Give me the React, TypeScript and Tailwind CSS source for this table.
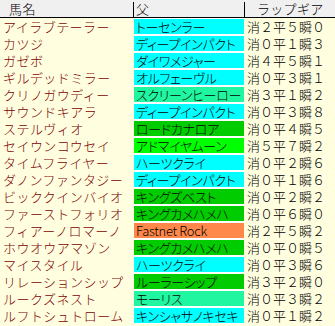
const CYAN = "bg-[#00ffff]";
const SPRING = "bg-[#20f6a0]";
const GREEN = "bg-[#00cc00]";
const LIME = "bg-[#00ff00]";
const ORANGE = "bg-[#ff884a]";

const rows = [
  { name: "アイラブテーラー", sire: "トーセンラー", bg: CYAN, gear: "消２平５瞬０" },
  { name: "カツジ", sire: "ディープインパクト", bg: CYAN, gear: "消０平１瞬３" },
  { name: "ガゼボ", sire: "ダイワメジャー", bg: CYAN, gear: "消４平５瞬１" },
  { name: "ギルデッドミラー", sire: "オルフェーヴル", bg: CYAN, gear: "消０平３瞬１" },
  { name: "クリノガウディー", sire: "スクリーンヒーロー", bg: SPRING, gear: "消３平１瞬２" },
  { name: "サウンドキアラ", sire: "ディープインパクト", bg: CYAN, gear: "消０平３瞬８" },
  { name: "ステルヴィオ", sire: "ロードカナロア", bg: GREEN, gear: "消０平４瞬５" },
  { name: "セイウンコウセイ", sire: "アドマイヤムーン", bg: LIME, gear: "消５平７瞬２" },
  { name: "タイムフライヤー", sire: "ハーツクライ", bg: CYAN, gear: "消０平２瞬６" },
  { name: "ダノンファンタジー", sire: "ディープインパクト", bg: CYAN, gear: "消０平１瞬６" },
  { name: "ビッククインバイオ", sire: "キングズベスト", bg: GREEN, gear: "消０平２瞬２" },
  { name: "ファーストフォリオ", sire: "キングカメハメハ", bg: GREEN, gear: "消０平６瞬０" },
  { name: "フィアーノロマーノ", sire: "Fastnet Rock", bg: ORANGE, gear: "消２平５瞬２" },
  { name: "ホウオウアマゾン", sire: "キングカメハメハ", bg: GREEN, gear: "消０平０瞬５" },
  { name: "マイスタイル", sire: "ハーツクライ", bg: CYAN, gear: "消０平３瞬６" },
  { name: "リレーションシップ", sire: "ルーラーシップ", bg: GREEN, gear: "消３平２瞬０" },
  { name: "ルークズネスト", sire: "モーリス", bg: SPRING, gear: "消０平３瞬２" },
  { name: "ルフトシュトローム", sire: "キンシャサノキセキ", bg: CYAN, gear: "消０平１瞬２" },
];

export default function App() {
  return (
    <div className="w-[335px] h-[326px] overflow-hidden bg-[#ffffe0] font-['Noto_Sans_CJK_JP',sans-serif] font-light text-[13px] leading-[15px]">
      <div className="flex h-[18px] bg-[#f0f0f0] border-b border-black text-black">
        <div className="w-[133px] flex items-center pl-[9px] tracking-[0.5px]">馬名</div>
        <div className="w-px h-[15px] mt-[2px] bg-black" />
        <div className="w-[110px] flex items-center pl-[2px]">父</div>
        <div className="w-px h-[15px] mt-[2px] bg-black" />
        <div className="flex-1 flex items-center pl-[12px] tracking-[0.3px]">ラップギア</div>
      </div>
      {rows.map((r) => (
        <div key={r.name} className="flex h-[17px]">
          <div className="w-[134px] flex items-center pl-[3px] text-[#800000] tracking-[0.45px] whitespace-nowrap">
            {r.name}
          </div>
          <div className="w-[110px] bg-white py-[1px]">
            <div className={`h-full ${r.bg} flex items-center pl-[2px] text-black whitespace-nowrap [font-feature-settings:'palt'] tracking-[-0.3px]`}>
              {r.sire}
            </div>
          </div>
          <div className="flex-1 flex items-center pl-[3px] text-black whitespace-nowrap">{r.gear}</div>
        </div>
      ))}
    </div>
  );
}
